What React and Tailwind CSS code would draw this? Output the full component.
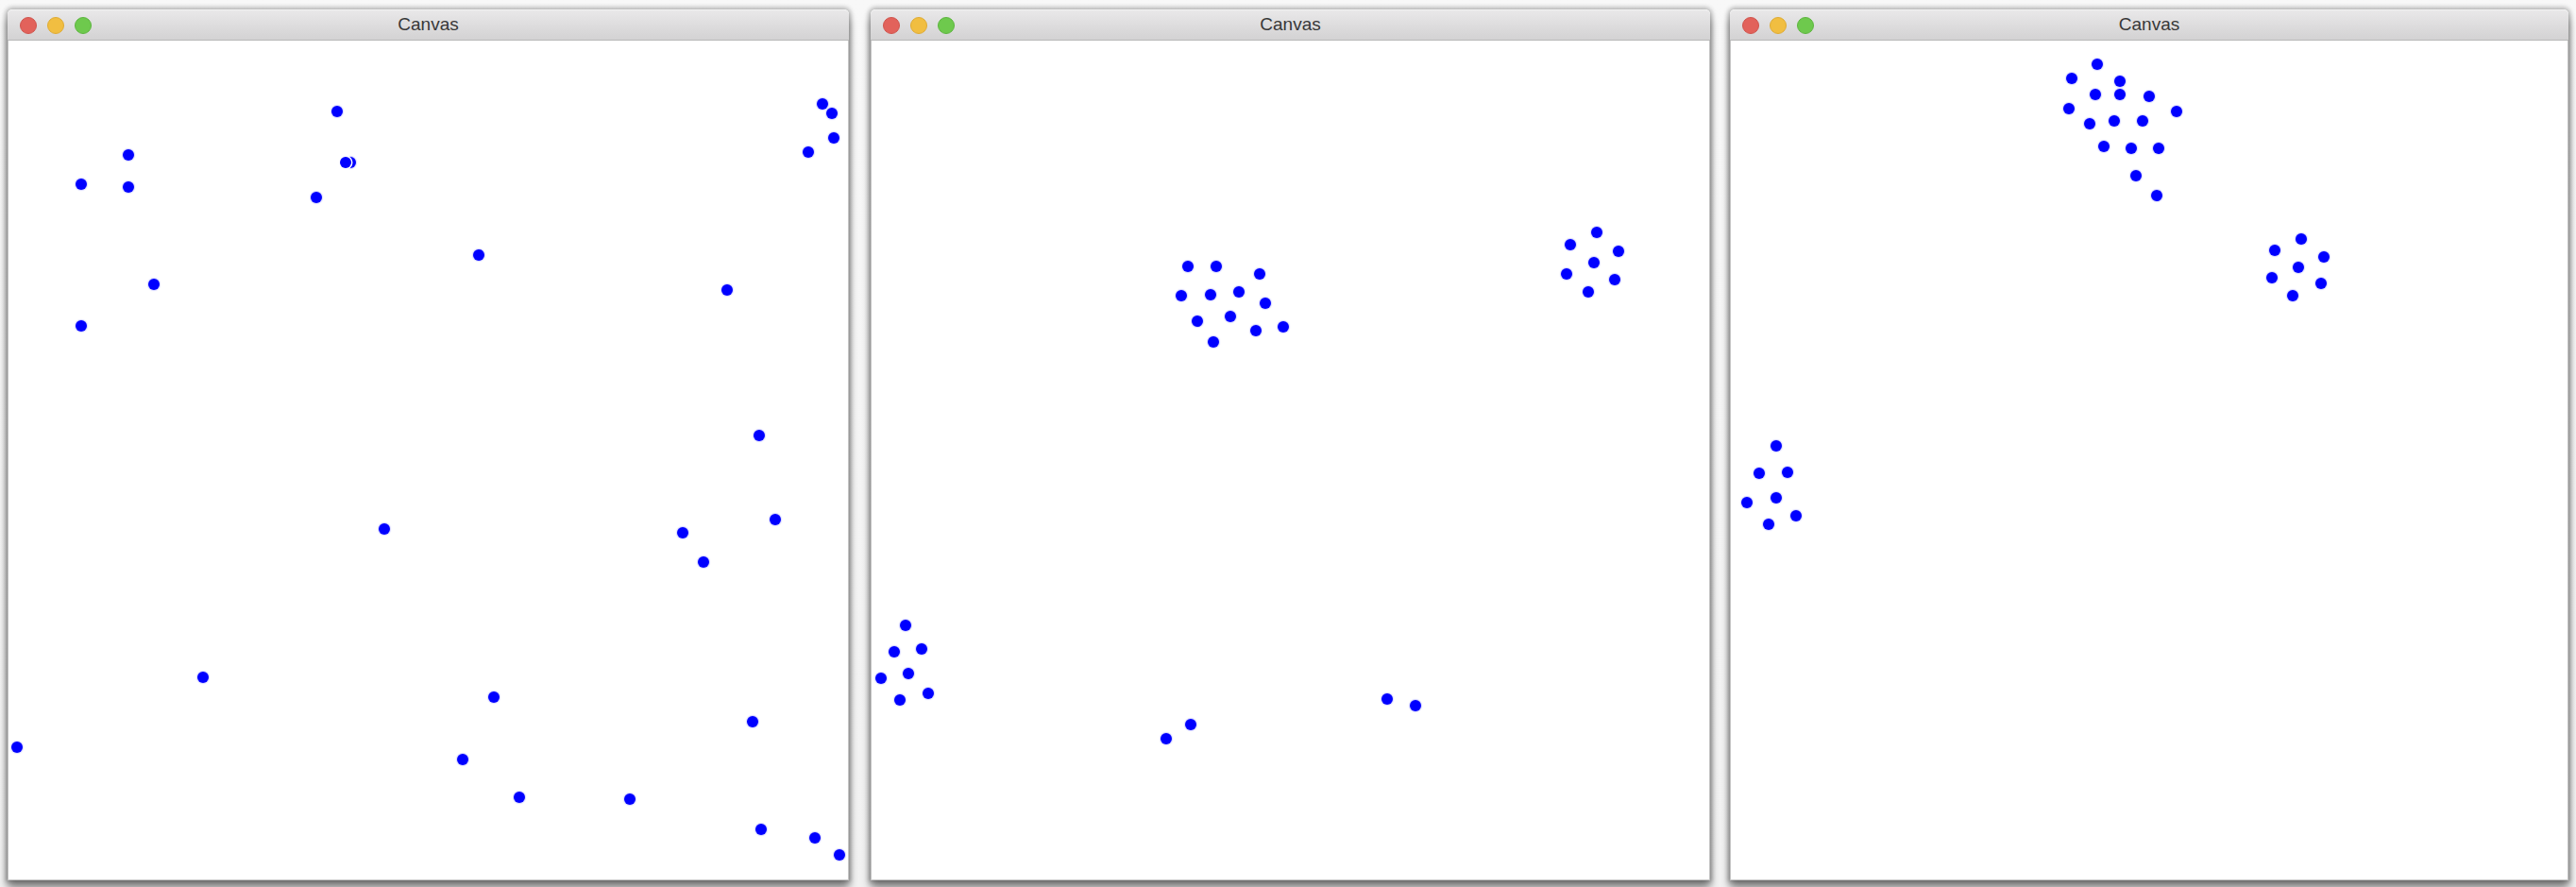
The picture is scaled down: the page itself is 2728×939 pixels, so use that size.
import React from "react";

const W1 = [
  [357, 118], [136.4, 164.1], [85.9, 195.2], [136.4, 198.2], [334.9, 209],
  [506.7, 269.5], [163.1, 300.6], [85.9, 345], [871.2, 109.6], [880.5, 119.8],
  [882.8, 146.1], [856.1, 161.1], [770.2, 306.6], [804.4, 460.6], [407.4, 560],
  [820.7, 550.4], [722.6, 564.2], [745.2, 595.3], [214.7, 716.9], [523, 737.8],
  [796.9, 764.2], [18, 791.1], [490.4, 804.3], [549.6, 844.4], [666.9, 845.7],
  [805.6, 878], [862.5, 887], [888.6, 905],
];

const W2 = [
  [1258.2, 282.1], [1287.8, 282.1], [1333.7, 289.9], [1251.3, 313.2], [1282, 312],
  [1311.6, 309], [1340.1, 321], [1267.5, 340.2], [1302.9, 335.4], [1329.6, 350.4],
  [1359.2, 346.2], [1284.9, 362.3],
  [1691.2, 246.1], [1662.8, 258.7], [1714.4, 265.9], [1687.7, 277.9], [1658.7, 289.9],
  [1710.4, 295.9], [1681.9, 309],
  [959.3, 661.8], [947.1, 689.9], [975.6, 686.9], [932.6, 717.5], [962.2, 713.3],
  [952.9, 741.4], [982.6, 734.3],
  [1261.1, 766.6], [1235, 781.6], [1468.9, 740.2], [1498.5, 747.4],
];

const W3 = [
  [2220.7, 67.7], [2194.1, 82.6], [2244.5, 85.6], [2219, 100], [2244.5, 100],
  [2275.7, 101.8], [2191.2, 115], [2305.3, 118], [2213.2, 131.2], [2238.7, 128.2],
  [2269.4, 128.2], [2228.3, 155.1], [2256.6, 156.9], [2286.2, 156.9], [2262.4, 186.3],
  [2284.4, 206.6],
  [2437.3, 252.7], [2408.9, 264.7], [2460.5, 271.9], [2434.4, 282.7], [2406, 294.1],
  [2457.6, 300], [2428, 313.2],
  [1881.4, 471.9], [1863.4, 501.3], [1893, 500.1], [1850.1, 532.4], [1881.4, 527],
  [1872.7, 555.2], [1902.2, 546.2],
];

function Dot({ x, y, ring }) {
  return (
    <div
      className={
        "absolute w-[12px] h-[12px] rounded-full bg-[#0000ff] " +
        (ring ? "shadow-[0_0_0_1.5px_#ffffff]" : "shadow-[0_0_1px_1px_rgba(150,150,255,0.4)]")
      }
      style={{ left: x - 6, top: y - 6 }}
    />
  );
}

function Window({ width, ox, dots, ghost }) {
  return (
    <div
      className="flex flex-col h-[922px] rounded-t-[5px] bg-white shadow-[0_0_5px_2px_rgba(0,0,0,0.3),0_9px_10px_rgba(0,0,0,0.42)]"
      style={{ width }}
    >
      <div className="relative flex items-center h-[33px] shrink-0 rounded-t-[5px] border-t border-[#f2f2f2] border-b border-b-[#b8b8b8] bg-gradient-to-b from-[#e9e8e9] to-[#d3d2d3]">
        <div className="flex items-center gap-[11px] pl-[13px]">
          <div className="w-[18px] h-[18px] rounded-full bg-[#e2625b] border border-[#d0544d]" />
          <div className="w-[18px] h-[18px] rounded-full bg-[#f1be41] border border-[#dfab33]" />
          <div className="w-[18px] h-[18px] rounded-full bg-[#6ec94d] border border-[#5cb53e]" />
        </div>
        <div className="absolute inset-0 flex items-center justify-center text-[19px] text-[#383838] font-['Liberation_Sans',Arial,sans-serif]">
          Canvas
        </div>
      </div>
      <div className="relative flex-1 bg-white border-x border-b border-[#c4c4c4] overflow-hidden">
        {ghost && <Dot x={ghost[0] - ox + 5} y={ghost[1] - 43} />}
        {dots.map((d, i) => (
          <Dot key={i} x={d[0] - ox} y={d[1] - 43} />
        ))}
        {ghost && <Dot x={ghost[0] - ox} y={ghost[1] - 43} ring />}
      </div>
    </div>
  );
}

export default function App() {
  return (
    <div className="w-[2728px] h-[939px] overflow-hidden bg-gradient-to-b from-[#f8f8f8] to-[#f1f1f1]">
      <div className="flex pt-[10px] pl-[8px] gap-[23px]">
        <Window width={891} ox={9} dots={W1} ghost={[365.7, 171.9]} />
        <Window width={889} ox={923} dots={W2} />
        <div className="-ml-[2px]">
          <Window width={888} ox={1833} dots={W3} />
        </div>
      </div>
    </div>
  );
}
